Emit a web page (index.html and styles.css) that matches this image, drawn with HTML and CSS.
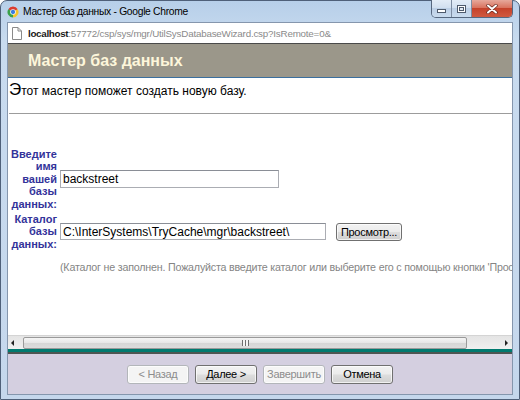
FILE: index.html
```html
<!DOCTYPE html>
<html>
<head>
<meta charset="utf-8">
<title>Мастер баз данных</title>
<link rel="stylesheet" href="styles.css">
</head>
<body>
<div class="window">
  <div class="titlebar">
    <svg class="chrome-logo" viewBox="0 0 24 24">
      <path d="M12 12 L2.47 6.5 A11 11 0 0 1 21.53 6.5 Z" fill="#db3b2f"/>
      <path d="M12 12 L21.53 6.5 A11 11 0 0 1 12 23 Z" fill="#f6c52c"/>
      <path d="M12 12 L12 23 A11 11 0 0 1 2.47 6.5 Z" fill="#3aa14a"/>
      <circle cx="12" cy="12" r="5.6" fill="#fff"/>
      <circle cx="12" cy="12" r="4.3" fill="#3b7de0"/>
    </svg>
    <span class="title">Мастер баз данных - Google Chrome</span>
    <div class="controls">
      <div class="ctl ctl-min"><span class="min-bar"></span></div>
      <div class="ctl ctl-max"><span class="max-box"></span></div>
      <div class="ctl ctl-close">
        <svg class="close-x" viewBox="0 0 12 10">
          <path d="M2 1.5 L10 8.5 M10 1.5 L2 8.5" stroke="#6a2a20" stroke-width="3.4" stroke-linecap="round"/>
          <path d="M2 1.5 L10 8.5 M10 1.5 L2 8.5" stroke="#ffffff" stroke-width="2" stroke-linecap="round"/>
        </svg>
      </div>
    </div>
  </div>
  <div class="client">
    <div class="address">
      <svg class="page-icon" viewBox="0 0 10 13">
        <path d="M0.5 0.5 H6 L9.5 4 V12.5 H0.5 Z" fill="#fff" stroke="#8a8a8a"/>
        <path d="M6 0.5 V4 H9.5" fill="none" stroke="#8a8a8a"/>
      </svg>
      <span class="host">localhost</span><span class="path">:57772/csp/sys/mgr/UtilSysDatabaseWizard.csp?IsRemote=0&amp;</span>
    </div>
    <div class="page">
      <div class="page-header">Мастер баз данных</div>
      <p class="intro"><span class="cap">Э</span>тот мастер поможет создать новую базу.</p>
      <hr class="rule">
      <div class="form">
        <div class="label">Введите<br>имя<br>вашей<br>базы<br>данных:</div>
        <div class="field"><input class="text-input name-input" type="text" value="backstreet"></div>
        <div class="label">Каталог<br>базы<br>данных:</div>
        <div class="field"><input class="text-input dir-input" type="text" value="C:\InterSystems\TryCache\mgr\backstreet\"><button class="btn btn-browse" type="button">Просмотр...</button></div>
        <div class="hint">(Каталог не заполнен. Пожалуйста введите каталог или выберите его с помощью кнопки 'Просмотр...')</div>
      </div>
    </div>
    <div class="hscroll">
      <span class="arrow arrow-left"></span>
      <div class="thumb"><span class="grip"></span></div>
      <span class="arrow arrow-right"></span>
    </div>
    <div class="teal"></div>
    <div class="footer">
      <button class="btn btn-nav" type="button" disabled>&lt; Назад</button>
      <button class="btn btn-nav" type="button"><u>Д</u>алее &gt;</button>
      <button class="btn btn-nav" type="button" disabled>Завершить</button>
      <button class="btn btn-nav" type="button">Отмена</button>
    </div>
  </div>
</div>
</body>
</html>
```
FILE: styles.css
```css
* { box-sizing: border-box; }
html, body { margin: 0; padding: 0; }
body {
  width: 520px;
  height: 400px;
  overflow: hidden;
  background: #fff;
  font-family: "Liberation Sans", Arial, sans-serif;
}
.window {
  width: 520px;
  height: 400px;
  display: flex;
  flex-direction: column;
  border: 1px solid #4f6079;
  border-radius: 7px 7px 0 0;
  background: linear-gradient(to bottom, #b7cfe9 0, #c8dbef 40px, #c5d7ec 100%);
}
.titlebar {
  height: 21px;
  flex: none;
  display: flex;
  align-items: flex-start;
  padding-left: 6px;
}
.chrome-logo {
  width: 12px;
  height: 12px;
  margin-top: 5px;
  flex: none;
}
.title {
  margin-left: 4px;
  margin-top: 4px;
  font-family: "Liberation Sans", Arial, sans-serif;
  font-size: 10.3px;
  letter-spacing: -0.3px;
  line-height: 14px;
  color: #000;
  white-space: nowrap;
}
.controls {
  margin-left: auto;
  margin-right: 6px;
  margin-top: -1px;
  display: flex;
  height: 18px;
  border: 1px solid #56677f;
  border-top: none;
  border-radius: 0 0 5px 5px;
  overflow: hidden;
  flex: none;
}
.ctl {
  height: 100%;
  display: flex;
  align-items: center;
  justify-content: center;
}
.ctl-min, .ctl-max {
  width: 20px;
  background: linear-gradient(to bottom, #e3ecf7 0, #d2e0f0 45%, #bccfe6 50%, #c9dbee 100%);
  border-right: 1px solid #7d8ca2;
}
.min-bar {
  width: 9px;
  height: 4px;
  margin-top: 4px;
  background: #fff;
  border: 1px solid #4e5a6c;
}
.max-box {
  width: 9px;
  height: 8px;
  border: 1px solid #4e5a6c;
  box-shadow: inset 0 0 0 1px #fff, inset 0 0 0 2px #4e5a6c;
  background: #dfe8f3;
}
.ctl-close {
  width: 40px;
  background: linear-gradient(to bottom, #e6a89b 0, #d9735f 45%, #c5422b 50%, #d0593f 100%);
}
.close-x {
  width: 12px;
  height: 10px;
}
.client {
  flex: 1;
  min-height: 0;
  margin: 0 6px 4px;
  border: 1px solid #8596ad;
  display: flex;
  flex-direction: column;
}
.address {
  height: 21px;
  flex: none;
  background: #fff;
  border-bottom: 1px solid #4a4a4a;
  display: flex;
  align-items: center;
  padding-left: 4px;
  font-family: "Liberation Sans", Arial, sans-serif;
  font-size: 9.8px;
  letter-spacing: -0.2px;
  white-space: nowrap;
  overflow: hidden;
}
.page-icon {
  width: 10px;
  height: 13px;
  margin-right: 6px;
  flex: none;
}
.host { color: #1a1a1a; font-weight: bold; letter-spacing: -0.3px; }
.path { color: #8a8a8a; }
.page {
  flex: 1;
  min-height: 0;
  overflow: hidden;
  background: #fff;
}
.page-header {
  height: 34px;
  background: #9b978a;
  border-bottom: 1px solid #3b6f9e;
  color: #fdf6da;
  font-weight: bold;
  font-size: 16px;
  line-height: 33px;
  padding-left: 20px;
}
.intro {
  margin: 0;
  padding: 3px 0 0 1px;
  font-size: 12px;
  line-height: 18px;
  color: #000;
}
.cap { font-size: 17px; }
.rule {
  margin: 13px 0 0 1px;
  border: 0;
  border-top: 1px solid #9c9c9c;
  height: 0;
}
.form {
  margin-top: 34px;
  padding-left: 2px;
  display: grid;
  grid-template-columns: 47px auto;
  column-gap: 3px;
  row-gap: 3px;
  align-items: center;
}
.label {
  text-align: right;
  font-weight: bold;
  font-size: 11px;
  line-height: 12.4px;
  color: #33339a;
}
.field {
  display: flex;
  align-items: center;
  gap: 10px;
}
.text-input {
  height: 18px;
  margin: 0;
  padding: 0 2px;
  border: 1px solid #abadb3;
  border-top-color: #8a8e96;
  background: #fff;
  font-family: "Liberation Sans", Arial, sans-serif;
  font-size: 12px;
  color: #000;
  outline: none;
}
.name-input { width: 219px; }
.dir-input { width: 266px; height: 17px; }
.btn {
  margin: 0;
  padding: 0;
  font-family: "Liberation Sans", Arial, sans-serif;
  font-size: 11px;
  letter-spacing: -0.3px;
  color: #000;
  border: 1px solid #707070;
  border-radius: 3px;
  background: linear-gradient(to bottom, #f2f2f2 0, #ebebeb 48%, #dddddd 52%, #cfcfcf 100%);
  box-shadow: inset 0 0 0 1px rgba(255,255,255,0.7);
}
.btn:disabled {
  color: #8d8d8d;
  border-color: #b3b6ba;
  background: #f4f4f4;
}
.btn-browse {
  width: 66px;
  height: 18px;
}
.hint {
  grid-column: 2;
  margin-top: 8px;
  font-size: 10.7px;
  letter-spacing: -0.2px;
  line-height: 13px;
  color: #858585;
  white-space: nowrap;
}
.hscroll {
  height: 14px;
  flex: none;
  display: flex;
  align-items: center;
  background: linear-gradient(to bottom, #e4e4e4, #f0f0f0);
  border-top: 1px solid #d4d4d4;
}
.arrow {
  width: 0;
  height: 0;
  flex: none;
  border-top: 3px solid transparent;
  border-bottom: 3px solid transparent;
}
.arrow-left {
  margin-left: 3px;
  border-right: 3px solid #222;
}
.arrow-right {
  margin-left: 38px;
  border-left: 3px solid #222;
}
.thumb {
  margin-left: 9px;
  width: 444px;
  height: 12px;
  border: 1px solid #9a9a9a;
  border-radius: 2px;
  background: linear-gradient(to bottom, #f5f5f5 0, #e6e6e6 50%, #d6d6d6 51%, #dcdcdc 100%);
  display: flex;
  align-items: center;
  justify-content: center;
}
.grip {
  width: 7px;
  height: 6px;
  background: repeating-linear-gradient(to right, #6e6e6e 0, #6e6e6e 1px, #f4f4f4 1px, #f4f4f4 3px);
}
.teal {
  height: 5px;
  flex: none;
  background: #007a6f;
  border-bottom: 2px solid #4d5552;
}
.footer {
  height: 40px;
  flex: none;
  background: #d4cfe0;
  display: flex;
  align-items: center;
  justify-content: center;
  gap: 6px;
}
.btn-nav {
  width: 62px;
  height: 19px;
}
.btn-nav u { text-decoration: underline; }
```
